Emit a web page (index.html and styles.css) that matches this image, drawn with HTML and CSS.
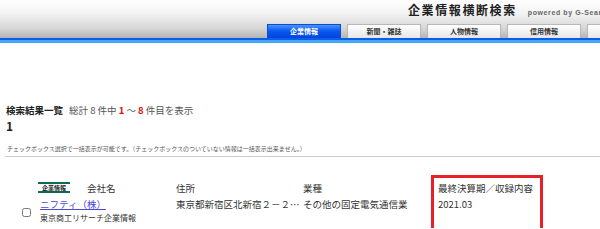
FILE: index.html
```html
<!DOCTYPE html>
<html lang="ja">
<head>
<meta charset="utf-8">
<title>企業情報横断検索</title>
<link rel="stylesheet" href="styles.css">
</head>
<body>
<header class="header">
  <div class="title-row">
    <span class="site-title">企業情報横断検索</span>
    <span class="powered">powered by G-Search</span>
  </div>
  <nav class="tabs">
    <span class="tab active">企業情報</span>
    <span class="tab">新聞・雑誌</span>
    <span class="tab">人物情報</span>
    <span class="tab">信用情報</span>
    <span class="tab"></span>
  </nav>
</header>
<div class="rule-blue"></div>
<main class="main">
  <div class="summary"><b class="summary-title">検索結果一覧</b><span class="summary-count">総計 8 件中 <b class="num">1</b> ～ <b class="num">8</b> 件目を表示</span></div>
  <div class="page-num">1</div>
  <p class="note">チェックボックス選択で一括表示が可能です。（チェックボックスのついていない情報は一括表示出来ません。）</p>
  <div class="results">
    <div class="col col-check">
      <div class="cell head"></div>
      <div class="check-wrap"><input type="checkbox" class="check"></div>
    </div>
    <div class="col col-company">
      <div class="cell head"><span class="badge">企業情報</span><span class="head-label">会社名</span></div>
      <div class="cell"><a href="#" class="link">ニフティ（株）</a></div>
      <div class="cell source">東京商工リサーチ企業情報</div>
    </div>
    <div class="col col-address">
      <div class="cell head">住所</div>
      <div class="cell">東京都新宿区北新宿２－２…</div>
    </div>
    <div class="col col-industry">
      <div class="cell head">業種</div>
      <div class="cell">その他の固定電気通信業</div>
    </div>
    <div class="col col-result">
      <div class="cell head">最終決算期／収録内容</div>
      <div class="cell">2021.03</div>
    </div>
  </div>
</main>
</body>
</html>
```

FILE: styles.css
```css
html, body {
  margin: 0;
  padding: 0;
  overflow: hidden;
  background: #fff;
}
body {
  width: 600px;
  height: 229px;
  font-family: "Noto Sans CJK JP", "Noto Sans", sans-serif;
  color: #333;
}
.header {
  height: 38px;
  background: linear-gradient(#ffffff 0%, #f3f3f3 35%, #d6d6d6 75%, #b4b4b4 100%);
  display: flex;
  flex-direction: column;
  overflow: hidden;
}
.title-row {
  height: 24px;
  display: flex;
  align-items: center;
  padding-left: 408px;
  white-space: nowrap;
  overflow: hidden;
}
.site-title {
  font-size: 12px;
  font-weight: bold;
  letter-spacing: 1.6px;
  color: #222;
  line-height: 16px;
  margin-top: -5px;
}
.powered {
  font-family: "Liberation Sans", sans-serif;
  font-size: 7px;
  font-weight: bold;
  letter-spacing: 0.6px;
  color: #666;
  margin-left: 11px;
  margin-top: 1px;
}
.tabs {
  display: flex;
  gap: 6px;
  padding-left: 267px;
  height: 14px;
  white-space: nowrap;
  overflow: hidden;
}
.tab {
  flex: 0 0 74px;
  box-sizing: border-box;
  height: 14px;
  border: 1px solid #b8b8b8;
  border-bottom: none;
  background: linear-gradient(#ffffff, #e6e6e6);
  font-size: 7px;
  font-weight: bold;
  line-height: 13px;
  text-align: center;
  color: #333;
}
.tab.active {
  border-color: #0a4fd0;
  background: linear-gradient(#4a94ff, #0a5af0 45%, #0044dd);
  color: #fff;
}
.rule-blue {
  height: 2px;
  background: #0a5ee8;
  border-bottom: 3px solid #45a6ff;
}
.main {
  padding: 60px 0 0 0;
}
.summary {
  padding-left: 6px;
  font-size: 9.5px;
  line-height: 14px;
  white-space: nowrap;
}
.summary-title {
  color: #222;
  margin-right: 6px;
}
.summary-count {
  color: #555;
}
.num {
  color: #e01010;
}
.page-num {
  padding-left: 6px;
  font-size: 12px;
  font-weight: bold;
  line-height: 17px;
  color: #222;
}
.note {
  margin: 10px 0 0 0;
  padding: 0 0 2px 7px;
  font-size: 6px;
  line-height: 10px;
  color: #555;
  white-space: nowrap;
}
.results {
  margin: 0 0 0 5px;
  border-top: 1px solid #cccccc;
  padding-top: 18px;
  display: flex;
  font-size: 9.5px;
  color: #333;
  white-space: nowrap;
}
.col {
  display: flex;
  flex-direction: column;
}
.cell {
  height: 14px;
  line-height: 14px;
}
.cell.head {
  height: 14px;
  padding: 6px 0 2px 0;
}
.col-check {
  width: 18px;
  padding-left: 15px;
}
.check-wrap {
  height: 28px;
  display: flex;
  align-items: center;
}
.check {
  width: 9px;
  height: 9px;
  margin: 3px 0 0 2px;
}
.col-company {
  width: 138px;
}
.col-company .cell {
  padding-left: 2px;
}
.col-company .cell.head {
  padding-left: 0;
  display: flex;
  align-items: center;
}
.badge {
  box-sizing: border-box;
  width: 32px;
  height: 11px;
  border-top: 2px solid #0f6a4e;
  border-bottom: 2px solid #0f6a4e;
  font-size: 6px;
  font-weight: bold;
  line-height: 7px;
  text-align: center;
  color: #222;
  margin-top: -2px;
}
.head-label {
  margin-left: 17px;
}
.link {
  color: #4a4ad8;
  text-decoration: underline;
}
.source {
  font-size: 8px;
}
.col-address {
  width: 127px;
}
.col-industry {
  width: 128px;
}
.col-result {
  box-sizing: border-box;
  width: 112px;
  height: 53px;
  border: 3px solid #e8202a;
  border-bottom: none;
  padding-left: 4px;
}
.col-result .cell.head {
  padding-top: 3px;
}
```
